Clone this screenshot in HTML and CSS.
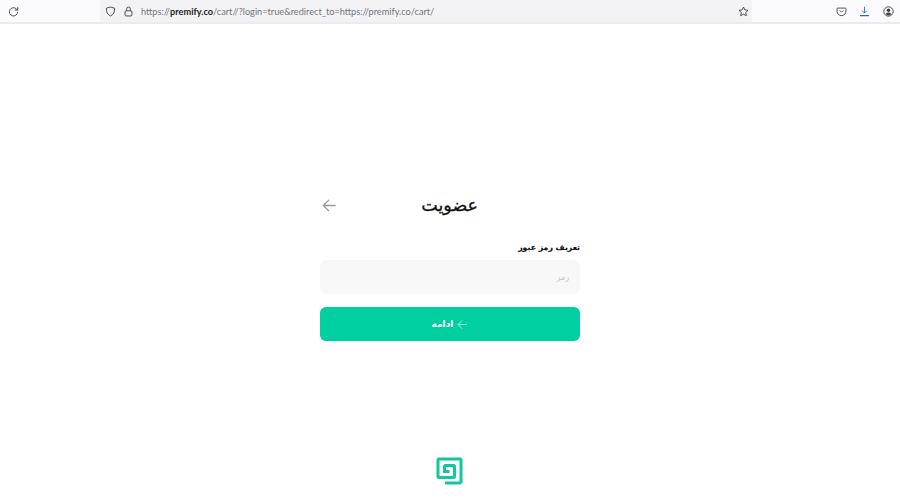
FILE: index.html
```html
<!DOCTYPE html>
<html lang="fa">
<head>
<meta charset="utf-8">
<title>عضویت</title>
<link rel="stylesheet" href="styles.css">
</head>
<body>
<header class="toolbar">
  <svg class="icon reload" viewBox="0 0 16 16"><path d="M14 8.500a6 6 0 1 1-1.800-4.300L14 6" /><path d="M14.200 1.500V6H9.700" /></svg>
  <div class="urlbar">
    <svg class="icon shield" viewBox="0 0 16 16"><path d="M8 1.500 14 3.200c.2 5.500-1.500 9.300-6 11.300-4.500-2-6.200-5.800-6-11.300Z"/></svg>
    <svg class="icon lock" viewBox="0 0 16 16"><rect x="3" y="7" width="10" height="7.500" rx="1.500"/><path d="M5.300 7V4.200a2.700 2.700 0 0 1 5.400 0V7"/></svg>
    <span class="url">https://<b>premify.co</b>/cart//?login=true&amp;redirect_to=https://premify.co/cart/</span>
    <svg class="icon star" viewBox="0 0 16 16"><path d="m8 1.500 2 4.200 4.600.6-3.400 3.200.9 4.600L8 11.900l-4.100 2.200.9-4.600L1.400 6.300 6 5.700Z"/></svg>
  </div>
  <div class="tools">
    <svg class="icon pocket" viewBox="0 0 16 16"><path d="M2.500 3h11c.6 0 1 .4 1 1v3.500a6.500 6.500 0 0 1-13 0V4c0-.6.400-1 1-1Z"/><path d="m5.500 6.500 2.500 2.500 2.500-2.500"/></svg>
    <svg class="icon download" viewBox="0 0 16 16"><path d="M8 1v9M4.500 6.800 8 10.300l3.500-3.500"/><path d="M1.500 14h13" class="thick"/></svg>
    <svg class="icon account" viewBox="0 0 16 16"><circle cx="8" cy="8" r="6.800"/><circle class="solid" cx="8" cy="6.200" r="2.400"/><path class="solid" d="M3.800 11.800c.8-1.800 2.500-2.500 4.200-2.500s3.400.7 4.200 2.500A5.800 5.800 0 0 1 8 13.700a5.800 5.800 0 0 1-4.200-1.900Z"/></svg>
  </div>
</header>
<main class="page">
  <section class="form" dir="rtl">
    <div class="head">
      <h1>عضویت</h1>
      <svg class="back" viewBox="0 0 16 16"><path d="M14.500 8H1.800M7.500 2 1.500 8l6 6"/></svg>
    </div>
    <label class="label" for="pw">تعریف رمز عبور</label>
    <input class="input" id="pw" type="text" placeholder="رمز">
    <button class="submit" type="button">
      <svg class="next" viewBox="0 0 16 16"><path d="M14.500 8H1.800M7.500 2 1.500 8l6 6"/></svg>
      <span>ادامه</span>
    </button>
  </section>
  <svg class="logo" viewBox="0 0 28 28"><path d="M25 26.500V3a1 1 0 0 0-1-1H3a1 1 0 0 0-1 1v16.500a1 1 0 0 0 1 1h14.500a1 1 0 0 0 1-1V9.500a1 1 0 0 0-1-1H9.500a1 1 0 0 0-1 1v5h5"/><path d="M9 26h16"/></svg>
</main>
</body>
</html>
```
FILE: styles.css
```css
* { box-sizing: border-box; }
html, body { margin: 0; height: 100%; background: #fff; overflow: hidden; }
body { font-family: "DejaVu Sans", "Noto Sans", sans-serif; display: flex; flex-direction: column; }

.toolbar {
  height: 24px;
  flex: none;
  display: flex;
  align-items: center;
  padding-left: 5px;
  padding-right: 5px;
  background: #fbfbfd;
  border-bottom: 2px solid #ebebee;
}
.icon { width: 11px; height: 11px; fill: none; stroke: #3c3c44; stroke-width: 1.300; flex: none; }
.reload { margin-left: 3px; }
.urlbar {
  margin-left: 81px;
  width: 652px;
  height: 22px;
  display: flex;
  align-items: center;
  background: #f3f3f6;
  padding: 0 3px 0 5px;
}
.lock { margin-left: 7px; }
.url {
  margin-left: 7px;
  font-family: "Lato", "Liberation Sans", sans-serif;
  font-size: 9.200px;
  color: #74747c;
  white-space: nowrap;
  flex: 1;
}
.url b { font-weight: 700; color: #1c1c22; }
.tools { margin-left: 84px; display: flex; gap: 12px; align-items: center; }
.download { stroke: #1f6fc4; }
.account { margin-left: 1px; }
.thick { stroke-width: 1.800; }
.account .solid { fill: #3c3c44; stroke: none; }

.page {
  flex: 1;
  display: flex;
  flex-direction: column;
  align-items: center;
  padding-top: 165px;
}
.form { width: 260px; display: flex; flex-direction: column; }
.head {
  height: 32px;
  display: flex;
  align-items: center;
  justify-content: space-between;
  padding-right: 102px;
}
h1 { margin: 0; font-size: 17.500px; font-weight: 400; color: #111; -webkit-text-stroke: .3px #111; line-height: 32px; }
.back { width: 15px; height: 15px; margin-left: 2px; fill: none; stroke: #9a9a9a; stroke-width: 1.500; }
.label { margin-top: 20px; font-size: 7.800px; font-weight: 700; color: #111; line-height: 14px; -webkit-text-stroke: .15px #111; }
.input {
  margin-top: 5px;
  height: 34px;
  border: 0;
  border-radius: 7px;
  background: #f8f8f8;
  padding: 0 11px;
  font: 8px "DejaVu Sans", sans-serif;
  outline: 0;
}
.input::placeholder { color: #c2c2c2; }
.submit {
  margin-top: 13px;
  height: 34px;
  border: 0;
  border-radius: 6px;
  background: #00cfa2;
  color: #fff;
  display: flex;
  align-items: center;
  justify-content: center;
  gap: 4px;
  font: 700 9px "DejaVu Sans", sans-serif;
}
.next { width: 11px; height: 11px; fill: none; stroke: #bff3e5; stroke-width: 1.200; }
.logo { width: 28px; height: 28px; margin-top: 116px; fill: none; stroke: #12c79b; stroke-width: 3px; }
```
